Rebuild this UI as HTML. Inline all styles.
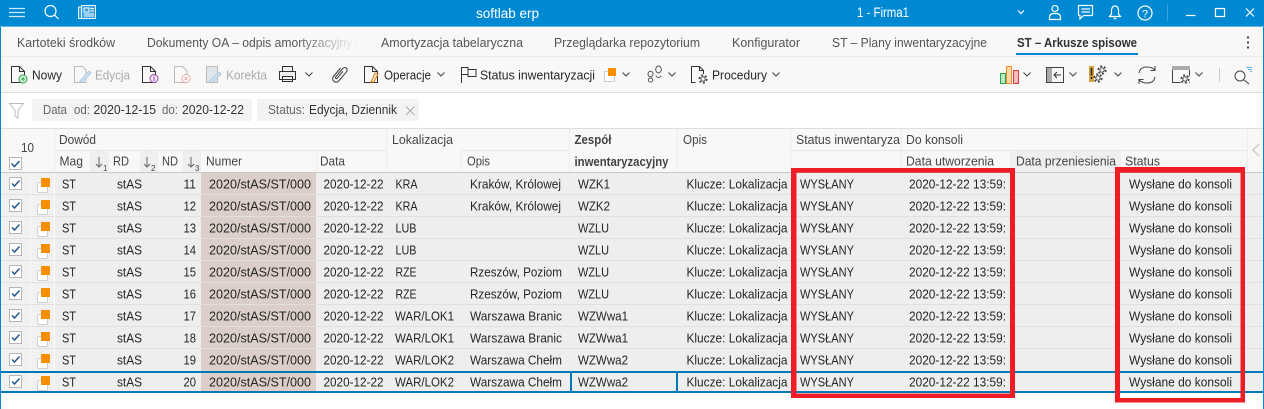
<!DOCTYPE html>
<html><head><meta charset="utf-8"><style>
html,body{margin:0;padding:0;background:#fff;width:1264px;height:409px;overflow:hidden}
svg{display:block}
text{font-family:"Liberation Sans",sans-serif;font-size:12.5px;fill:#262626;white-space:pre}
.t{fill:#fff;font-size:13.5px}
.tab{fill:#555;font-size:12.5px}
.b{font-weight:bold}
.h{fill:#444;font-size:12.5px}
.g{fill:#aaa}
.f{fill:#666}
.ln{fill:none;stroke:#333;stroke-width:1}
.w{fill:none;stroke:#fff;stroke-width:1.2}
.gi{fill:none;stroke:#bbb;stroke-width:1}
</style></head><body>
<svg width="1264" height="409" viewBox="0 0 1264 409" xmlns="http://www.w3.org/2000/svg">
<defs>
<linearGradient id="fd" x1="147" x2="353" y1="0" y2="0" gradientUnits="userSpaceOnUse"><stop offset="0.72" stop-color="#555"/><stop offset="1" stop-color="#555" stop-opacity="0.05"/></linearGradient>
<symbol id="ri" overflow="visible"><rect x="9.5" y="4.5" width="12" height="12" fill="#fff" stroke="#b5b5b5"/><path d="M12 10.500l2.500 2.500 5-5.500" fill="none" stroke="#27598c" stroke-width="1.500"/><rect x="37.500" y="9.500" width="10" height="10" rx="1.500" fill="#fff" stroke="#cfcfcf"/><rect x="41" y="5" width="9" height="9" fill="#f88f00"/></symbol>
<symbol id="ch" overflow="visible"><path d="M-3.500 -1.500L0 2l3.500-3.500" fill="none" stroke="#444" stroke-width="1"/></symbol>
<symbol id="dc" overflow="visible"><path d="M.5.5H8.500L13.500 5.500V16.500H.5Z M8.500.5V5.500H13.500" fill="none" stroke="#333"/></symbol>
<symbol id="gr" overflow="visible"><circle r="2.200" fill="none" stroke="#444"/><circle r="3.800" fill="none" stroke="#444" stroke-width="1.600" stroke-dasharray="2 1.980"/></symbol>
</defs>

<rect width="1264" height="409" fill="#fff"/>
<!-- title bar -->
<rect width="1264" height="26" fill="#0089d3"/>
<rect y="26" width="1264" height="1" fill="#6cb8e4"/>
<path d="M9 8.500H25M9 12.500H25M9 16.500H25" stroke="#cfe9f8" stroke-width="1.300"/>
<circle cx="50.500" cy="11" r="5.500" class="w"/><path d="M54.500 15L58.500 19" class="w"/>
<path d="M81.500 5.500H95.500V18.500H81.500ZM81 7H78.500V18.500H81.500" fill="#d5ebf8" fill-opacity=".25" stroke="#e6f4fc"/>
<rect x="84" y="8" width="5" height="4" fill="none" stroke="#fff"/><path d="M90.500 8.500H94M90.500 11H94M84 14H94M84 16H94" stroke="#fff"/>
<text class="t" x="476" y="18" textLength="63" lengthAdjust="spacingAndGlyphs">softlab erp</text>
<text class="t" x="857" y="17" textLength="52" lengthAdjust="spacingAndGlyphs">1 - Firma1</text>
<path d="M1018 10.500l3 3 3-3" class="w" stroke-width="1.600"/>
<circle cx="1055" cy="8.500" r="3" class="w"/><path d="M1049.500 19.500V17.500Q1049.500 14 1053 13.500H1057Q1060.500 14 1060.500 17.500V19.500Z" class="w"/>
<path d="M1078.500 5.500H1092.500V15.500H1083.500L1080 19V15.500H1078.500Z M1081.500 9H1090M1081.500 12H1090" class="w"/>
<path d="M1109.500 16.500H1120.500L1118.500 14V10Q1118 6 1115 6Q1112 6 1111.500 10V14ZM1113.500 18.500H1116.500" class="w"/>
<circle cx="1145" cy="13" r="7" class="w"/><text x="1142" y="17.500" style="fill:#fff;font-size:11px">?</text>
<rect x="1167" y="4" width="1" height="17" fill="#3ba3dd"/>
<path d="M1186 15.500H1195.500" class="w"/><rect x="1215.500" y="8.500" width="9" height="8" class="w"/><path d="M1246 8.500L1254 16.500M1254 8.500L1246 16.500" class="w"/>

<!-- tabs -->
<rect y="27" width="1264" height="29" fill="#f9f8f6"/>
<rect y="56" width="1264" height="1" fill="#eceae8"/>
<text class="tab" x="17" y="47" textLength="98" lengthAdjust="spacingAndGlyphs">Kartoteki środków</text>
<text class="tab" x="147" y="47" textLength="212" lengthAdjust="spacingAndGlyphs" style="fill:url(#fd)">Dokumenty OA – odpis amortyzacyjny /</text>
<text class="tab" x="381" y="47" textLength="142" lengthAdjust="spacingAndGlyphs">Amortyzacja tabelaryczna</text>
<text class="tab" x="554" y="47" textLength="146" lengthAdjust="spacingAndGlyphs">Przeglądarka repozytorium</text>
<text class="tab" x="732" y="47" textLength="68" lengthAdjust="spacingAndGlyphs">Konfigurator</text>
<text class="tab" x="832" y="47" textLength="155" lengthAdjust="spacingAndGlyphs">ST – Plany inwentaryzacyjne</text>
<text class="tab b" x="1017" y="47" textLength="120" lengthAdjust="spacingAndGlyphs" style="fill:#333">ST – Arkusze spisowe</text>
<rect x="1016" y="53" width="122" height="2" fill="#0089d3"/>
<path d="M1248 36.500v2M1248 41.500v2M1248 46.500v2" stroke="#444" stroke-width="2"/>

<!-- toolbar -->
<rect y="57" width="1264" height="35" fill="#f9f8f6"/>
<rect y="92" width="1264" height="1" fill="#ddd"/>
<use href="#dc" x="11" y="66"/><circle cx="23" cy="79" r="4" fill="#dff3df" stroke="#2aa24a"/><path d="M21 79h4M23 77v4" stroke="#2aa24a"/>
<text x="32" y="79.500" textLength="30" lengthAdjust="spacingAndGlyphs">Nowy</text>
<path d="M74.500 66.500H82.500L86 70V82.500H74.500Z" class="gi"/><path d="M80 81L89 71L91 73L82 82.500Z" fill="#cfe2f2" stroke="#b0cbe0"/>
<text class="g" x="95" y="79.500" textLength="35" lengthAdjust="spacingAndGlyphs">Edycja</text>
<use href="#dc" x="142" y="66"/><circle cx="154" cy="78.500" r="4" fill="#f6eef8" stroke="#9a3fb0"/><path d="M154 77v4M154 75.500v1" stroke="#9a3fb0"/>
<path d="M174.500 66.500H182.500L187 71V82.500H174.500Z" class="gi"/><circle cx="186" cy="78.500" r="4" fill="#fff" stroke="#eeaaaa"/><path d="M184.500 77l3 3M187.500 77l-3 3" stroke="#eeaaaa"/>
<path d="M206.500 66.500H217.500V82.500H206.500Z" fill="#dfe5ea" stroke="#bbb"/><path d="M209 82L219 72L221 74L212 83Z" fill="#cfe2f2" stroke="#b0cbe0"/>
<text class="g" x="226" y="79.500" textLength="41" lengthAdjust="spacingAndGlyphs">Korekta</text>
<path d="M282.500 71V66.500H292.500V71M279.500 71.500H295.500V79.500H279.500ZM282.500 76.500H292.500V81.500H282.500Z" fill="#eee" stroke="#333"/>
<use href="#ch" x="309" y="74"/>
<path transform="translate(339,74.500) rotate(40) translate(-6,-10)" d="M3 4V15a3.500 3.500 0 0 0 7 0V3a2.500 2.500 0 0 0-5 0V14a1 1 0 0 0 2 0V5" fill="none" stroke="#444" stroke-width="1.100"/>
<use href="#dc" x="364" y="66"/><path d="M371 82L375 73L378 74L374 82Z" fill="#fbe3c6" stroke="#e0811a"/>
<text x="384" y="79.500" textLength="47" lengthAdjust="spacingAndGlyphs">Operacje</text>
<use href="#ch" x="441" y="74"/>
<path d="M461.500 83V67.500H468V69.500H476V76.500H468V74.500H461.500M468 67.500V74.500" class="ln"/>
<text x="480" y="79.500" textLength="115" lengthAdjust="spacingAndGlyphs">Status inwentaryzacji</text>
<rect x="604.500" y="71.500" width="10" height="10" fill="#fff" stroke="#ccc"/><rect x="608" y="68" width="8" height="8" fill="#f88f00"/>
<use href="#ch" x="626" y="74"/>
<g fill="none" stroke="#555"><ellipse cx="650.500" cy="74" rx="2.500" ry="2.700"/><ellipse cx="650.500" cy="80" rx="2.200" ry="2"/><ellipse cx="658.500" cy="69.500" rx="2.800" ry="3.500"/><path d="M656 75.500a2.500 2 0 0 0 5 0"/></g>
<use href="#ch" x="672" y="74"/>
<path d="M695.500 82.500H691.500V66.500H699.500L703.500 70.500V74M699.500 66.500V70.500H703.500" class="ln"/><use href="#gr" x="703" y="79"/>
<text x="712" y="79.500" textLength="55" lengthAdjust="spacingAndGlyphs">Procedury</text>
<use href="#ch" x="776" y="74"/>
<rect x="1000.500" y="73.500" width="5" height="10" fill="#bfe6c6" stroke="#2aa24a"/>
<rect x="1006.500" y="66.500" width="5" height="17" fill="#fbd9a5" stroke="#e8912c"/>
<rect x="1013.500" y="70.500" width="5" height="13" fill="#f6bcbc" stroke="#dd3a3a"/>
<use href="#ch" x="1027" y="74"/>
<rect x="1046" y="67" width="6" height="16" fill="#aaa"/><rect x="1046.500" y="67.500" width="17" height="15" fill="none" stroke="#444"/><path d="M1061 75H1054M1057 72L1054 75L1057 78" fill="none" stroke="#333"/>
<use href="#ch" x="1073" y="74"/>
<rect x="1089" y="66" width="5" height="16" fill="#d4a13c"/><path d="M1091.500 68v7.500M1091.500 77v2" stroke="#222" stroke-width="1.500"/>
<use href="#gr" x="1102" y="70"/><use href="#gr" x="1098" y="78"/>
<use href="#ch" x="1118" y="74"/>
<path d="M1139 73Q1140 67 1147 67Q1152 67 1155 70M1155 66V70.500H1150.500M1155 77Q1154 83 1147 83Q1142 83 1139 80M1139 84V79.500H1143.500" fill="none" stroke="#444"/>
<rect x="1172.500" y="66.500" width="17" height="16" fill="none" stroke="#444"/><rect x="1172" y="66" width="18" height="4" fill="#aaa"/><circle cx="1185" cy="79" r="5.500" fill="#f9f8f6"/><use href="#gr" x="1185" y="79"/>
<use href="#ch" x="1199" y="74"/>
<rect x="1219" y="68" width="1" height="14" fill="#ccc"/>
<circle cx="1240" cy="76" r="5" fill="none" stroke="#444"/><path d="M1244 80L1249 84" stroke="#444"/><path d="M1246 67.500h6M1248 69.500h4M1250 71.500h2" stroke="#6bb5e5"/>

<!-- filter row -->
<rect y="128" width="1264" height="1" fill="#ddd"/>
<path d="M9.500 103.500H23.500L18 110.500V118L15 116V110.500Z" fill="none" stroke="#bbb"/>
<rect x="32" y="99" width="220" height="22" rx="2" fill="#f3f3f3"/>
<rect x="257" y="99" width="162" height="22" rx="2" fill="#f3f3f3"/>
<text class="f" x="43" y="114" textLength="24" lengthAdjust="spacingAndGlyphs">Data</text>
<text class="f" x="74" y="114" textLength="16" lengthAdjust="spacingAndGlyphs">od:</text>
<text x="93.500" y="114" textLength="62.500" lengthAdjust="spacingAndGlyphs" style="fill:#333">2020-12-15</text>
<text class="f" x="162" y="114" textLength="16" lengthAdjust="spacingAndGlyphs">do:</text>
<text x="182" y="114" textLength="62" lengthAdjust="spacingAndGlyphs" style="fill:#333">2020-12-22</text>
<text class="f" x="268" y="114" textLength="37" lengthAdjust="spacingAndGlyphs">Status:</text>
<text x="309" y="114" textLength="88" lengthAdjust="spacingAndGlyphs" style="fill:#333">Edycja, Dziennik</text>
<path d="M406 106.500L414.500 115M414.500 106.500L406 115" stroke="#aaa"/>

<!-- grid header -->
<rect x="1" y="129" width="1262" height="43" fill="#f9f8f6"/>
<rect x="1" y="172" width="1262" height="1" fill="#c8c8c8"/>
<rect x="90" y="151" width="18" height="21" fill="#efefef"/><rect x="140" y="151" width="17" height="21" fill="#efefef"/><rect x="183" y="151" width="17" height="21" fill="#efefef"/>
<rect x="1010" y="151" width="110" height="21" fill="#efefef"/>
<path d="M54.500 129V172M386.500 129V172M569.500 129V172M677.500 129V172M790.500 129V172M1247.500 129V172M108.500 151V172M140.500 151V172M157.500 151V172M183.500 151V172M200.500 151V172M316.500 151V172M461.500 151V172M901.500 129V172M1010.500 151V172M1120.500 151V172" stroke="#eeedeb"/>
<path d="M55 150.500H386M461 150.500H569M901 150.500H1247M790 150.500H901" stroke="#e8e7e5"/>
<text class="h" x="21" y="152" textLength="13" lengthAdjust="spacingAndGlyphs">10</text>
<rect x="9.500" y="157.500" width="12" height="12" fill="#fff" stroke="#b5b5b5"/><path d="M11.500 163.500l3 3 5-5.500" fill="none" stroke="#27598c" stroke-width="1.500"/>
<text class="h" x="59" y="144" textLength="37" lengthAdjust="spacingAndGlyphs">Dowód</text>
<text class="h" x="59.500" y="165.500" textLength="23.500" lengthAdjust="spacingAndGlyphs">Mag</text>
<path d="M99 157V167M96 164L99 167L102 164" fill="none" stroke="#666"/><text x="103" y="171" style="font-size:8px;fill:#444">1</text>
<text class="h" x="113" y="165.500" textLength="16" lengthAdjust="spacingAndGlyphs">RD</text>
<path d="M147 157V167M144 164L147 167L150 164" fill="none" stroke="#666"/><text x="151" y="171" style="font-size:8px;fill:#444">2</text>
<text class="h" x="162" y="165.500" textLength="16" lengthAdjust="spacingAndGlyphs">ND</text>
<path d="M191 157V167M188 164L191 167L194 164" fill="none" stroke="#666"/><text x="195" y="171" style="font-size:8px;fill:#444">3</text>
<text class="h" x="206" y="165.500" textLength="36" lengthAdjust="spacingAndGlyphs">Numer</text>
<text class="h" x="320" y="165.500" textLength="25" lengthAdjust="spacingAndGlyphs">Data</text>
<text class="h" x="392" y="144" textLength="61" lengthAdjust="spacingAndGlyphs">Lokalizacja</text>
<text class="h" x="467" y="165.500" textLength="23" lengthAdjust="spacingAndGlyphs">Opis</text>
<text class="h b" x="574.500" y="144" textLength="37" lengthAdjust="spacingAndGlyphs">Zespół</text>
<text class="h b" x="574.500" y="166" textLength="94" lengthAdjust="spacingAndGlyphs">inwentaryzacyjny</text>
<text class="h" x="683" y="144" textLength="24" lengthAdjust="spacingAndGlyphs">Opis</text>
<text class="h" x="796" y="144" textLength="104" lengthAdjust="spacingAndGlyphs">Status inwentaryza</text>
<text class="h" x="906" y="144" textLength="57" lengthAdjust="spacingAndGlyphs">Do konsoli</text>
<text class="h" x="906" y="165.500" textLength="88" lengthAdjust="spacingAndGlyphs">Data utworzenia</text>
<text class="h" x="1016" y="165.500" textLength="100" lengthAdjust="spacingAndGlyphs">Data przeniesienia</text>
<text class="h" x="1125" y="165.500" textLength="35" lengthAdjust="spacingAndGlyphs">Status</text>
<path d="M1259 144L1253 150L1259 156" fill="none" stroke="#ccc" stroke-width="1.500"/>

<!-- rows background -->
<rect x="1" y="173" width="1262" height="219" fill="#eeeeee"/>
<rect x="201" y="173" width="115" height="219" fill="#dccfca"/>
<rect x="1" y="173" width="53" height="219" fill="#f1f1f1"/>
<path d="M1 194.500H1263M1 216.500H1263M1 238.500H1263M1 260.500H1263M1 282.500H1263M1 304.500H1263M1 326.500H1263M1 348.500H1263" stroke="#e0e0e0"/>
<path d="M30.500 173V392M54.500 173V392" stroke="#fafafa"/>

<g transform="translate(0,173)"><use href="#ri"/>
<text x="62" y="15.500" textLength="14" lengthAdjust="spacingAndGlyphs">ST</text><text x="117" y="15.500" textLength="25" lengthAdjust="spacingAndGlyphs">stAS</text><text x="183.500" y="15.500" textLength="12.500" lengthAdjust="spacingAndGlyphs">11</text><text x="209" y="15.500" textLength="102" lengthAdjust="spacingAndGlyphs">2020/stAS/ST/000</text><text x="323.500" y="15.500" textLength="60" lengthAdjust="spacingAndGlyphs">2020-12-22</text>
<text x="395.500" y="15.500" textLength="22" lengthAdjust="spacingAndGlyphs">KRA</text><text x="470" y="15.500" textLength="91" lengthAdjust="spacingAndGlyphs">Kraków, Królowej</text><text x="578" y="15.500" textLength="32" lengthAdjust="spacingAndGlyphs">WZK1</text><text x="686.500" y="15.500" textLength="101" lengthAdjust="spacingAndGlyphs">Klucze: Lokalizacja</text>
<text x="800" y="15.500" textLength="54" lengthAdjust="spacingAndGlyphs">WYSŁANY</text><text x="909" y="15.500" textLength="97" lengthAdjust="spacingAndGlyphs">2020-12-22 13:59:</text><text x="1129" y="15.500" textLength="103" lengthAdjust="spacingAndGlyphs">Wysłane do konsoli</text></g>

<g transform="translate(0,195)"><use href="#ri"/>
<text x="62" y="15.500" textLength="14" lengthAdjust="spacingAndGlyphs">ST</text><text x="117" y="15.500" textLength="25" lengthAdjust="spacingAndGlyphs">stAS</text><text x="183.500" y="15.500" textLength="12.500" lengthAdjust="spacingAndGlyphs">12</text><text x="209" y="15.500" textLength="102" lengthAdjust="spacingAndGlyphs">2020/stAS/ST/000</text><text x="323.500" y="15.500" textLength="60" lengthAdjust="spacingAndGlyphs">2020-12-22</text>
<text x="395.500" y="15.500" textLength="22" lengthAdjust="spacingAndGlyphs">KRA</text><text x="470" y="15.500" textLength="91" lengthAdjust="spacingAndGlyphs">Kraków, Królowej</text><text x="578" y="15.500" textLength="32" lengthAdjust="spacingAndGlyphs">WZK2</text><text x="686.500" y="15.500" textLength="101" lengthAdjust="spacingAndGlyphs">Klucze: Lokalizacja</text>
<text x="800" y="15.500" textLength="54" lengthAdjust="spacingAndGlyphs">WYSŁANY</text><text x="909" y="15.500" textLength="97" lengthAdjust="spacingAndGlyphs">2020-12-22 13:59:</text><text x="1129" y="15.500" textLength="103" lengthAdjust="spacingAndGlyphs">Wysłane do konsoli</text></g>

<g transform="translate(0,217)"><use href="#ri"/>
<text x="62" y="15.500" textLength="14" lengthAdjust="spacingAndGlyphs">ST</text><text x="117" y="15.500" textLength="25" lengthAdjust="spacingAndGlyphs">stAS</text><text x="183.500" y="15.500" textLength="12.500" lengthAdjust="spacingAndGlyphs">13</text><text x="209" y="15.500" textLength="102" lengthAdjust="spacingAndGlyphs">2020/stAS/ST/000</text><text x="323.500" y="15.500" textLength="60" lengthAdjust="spacingAndGlyphs">2020-12-22</text>
<text x="395.500" y="15.500" textLength="21" lengthAdjust="spacingAndGlyphs">LUB</text><text x="578" y="15.500" textLength="31" lengthAdjust="spacingAndGlyphs">WZLU</text><text x="686.500" y="15.500" textLength="101" lengthAdjust="spacingAndGlyphs">Klucze: Lokalizacja</text>
<text x="800" y="15.500" textLength="54" lengthAdjust="spacingAndGlyphs">WYSŁANY</text><text x="909" y="15.500" textLength="97" lengthAdjust="spacingAndGlyphs">2020-12-22 13:59:</text><text x="1129" y="15.500" textLength="103" lengthAdjust="spacingAndGlyphs">Wysłane do konsoli</text></g>

<g transform="translate(0,239)"><use href="#ri"/>
<text x="62" y="15.500" textLength="14" lengthAdjust="spacingAndGlyphs">ST</text><text x="117" y="15.500" textLength="25" lengthAdjust="spacingAndGlyphs">stAS</text><text x="183.500" y="15.500" textLength="12.500" lengthAdjust="spacingAndGlyphs">14</text><text x="209" y="15.500" textLength="102" lengthAdjust="spacingAndGlyphs">2020/stAS/ST/000</text><text x="323.500" y="15.500" textLength="60" lengthAdjust="spacingAndGlyphs">2020-12-22</text>
<text x="395.500" y="15.500" textLength="21" lengthAdjust="spacingAndGlyphs">LUB</text><text x="578" y="15.500" textLength="31" lengthAdjust="spacingAndGlyphs">WZLU</text><text x="686.500" y="15.500" textLength="101" lengthAdjust="spacingAndGlyphs">Klucze: Lokalizacja</text>
<text x="800" y="15.500" textLength="54" lengthAdjust="spacingAndGlyphs">WYSŁANY</text><text x="909" y="15.500" textLength="97" lengthAdjust="spacingAndGlyphs">2020-12-22 13:59:</text><text x="1129" y="15.500" textLength="103" lengthAdjust="spacingAndGlyphs">Wysłane do konsoli</text></g>

<g transform="translate(0,261)"><use href="#ri"/>
<text x="62" y="15.500" textLength="14" lengthAdjust="spacingAndGlyphs">ST</text><text x="117" y="15.500" textLength="25" lengthAdjust="spacingAndGlyphs">stAS</text><text x="183.500" y="15.500" textLength="12.500" lengthAdjust="spacingAndGlyphs">15</text><text x="209" y="15.500" textLength="102" lengthAdjust="spacingAndGlyphs">2020/stAS/ST/000</text><text x="323.500" y="15.500" textLength="60" lengthAdjust="spacingAndGlyphs">2020-12-22</text>
<text x="395.500" y="15.500" textLength="21" lengthAdjust="spacingAndGlyphs">RZE</text><text x="470" y="15.500" textLength="92" lengthAdjust="spacingAndGlyphs">Rzeszów, Poziom</text><text x="578" y="15.500" textLength="31" lengthAdjust="spacingAndGlyphs">WZLU</text><text x="686.500" y="15.500" textLength="101" lengthAdjust="spacingAndGlyphs">Klucze: Lokalizacja</text>
<text x="800" y="15.500" textLength="54" lengthAdjust="spacingAndGlyphs">WYSŁANY</text><text x="909" y="15.500" textLength="97" lengthAdjust="spacingAndGlyphs">2020-12-22 13:59:</text><text x="1129" y="15.500" textLength="103" lengthAdjust="spacingAndGlyphs">Wysłane do konsoli</text></g>

<g transform="translate(0,283)"><use href="#ri"/>
<text x="62" y="15.500" textLength="14" lengthAdjust="spacingAndGlyphs">ST</text><text x="117" y="15.500" textLength="25" lengthAdjust="spacingAndGlyphs">stAS</text><text x="183.500" y="15.500" textLength="12.500" lengthAdjust="spacingAndGlyphs">16</text><text x="209" y="15.500" textLength="102" lengthAdjust="spacingAndGlyphs">2020/stAS/ST/000</text><text x="323.500" y="15.500" textLength="60" lengthAdjust="spacingAndGlyphs">2020-12-22</text>
<text x="395.500" y="15.500" textLength="21" lengthAdjust="spacingAndGlyphs">RZE</text><text x="470" y="15.500" textLength="92" lengthAdjust="spacingAndGlyphs">Rzeszów, Poziom</text><text x="578" y="15.500" textLength="31" lengthAdjust="spacingAndGlyphs">WZLU</text><text x="686.500" y="15.500" textLength="101" lengthAdjust="spacingAndGlyphs">Klucze: Lokalizacja</text>
<text x="800" y="15.500" textLength="54" lengthAdjust="spacingAndGlyphs">WYSŁANY</text><text x="909" y="15.500" textLength="97" lengthAdjust="spacingAndGlyphs">2020-12-22 13:59:</text><text x="1129" y="15.500" textLength="103" lengthAdjust="spacingAndGlyphs">Wysłane do konsoli</text></g>

<g transform="translate(0,305)"><use href="#ri"/>
<text x="62" y="15.500" textLength="14" lengthAdjust="spacingAndGlyphs">ST</text><text x="117" y="15.500" textLength="25" lengthAdjust="spacingAndGlyphs">stAS</text><text x="183.500" y="15.500" textLength="12.500" lengthAdjust="spacingAndGlyphs">17</text><text x="209" y="15.500" textLength="102" lengthAdjust="spacingAndGlyphs">2020/stAS/ST/000</text><text x="323.500" y="15.500" textLength="60" lengthAdjust="spacingAndGlyphs">2020-12-22</text>
<text x="395" y="15.500" textLength="59" lengthAdjust="spacingAndGlyphs">WAR/LOK1</text><text x="470" y="15.500" textLength="92" lengthAdjust="spacingAndGlyphs">Warszawa Branic</text><text x="578" y="15.500" textLength="50" lengthAdjust="spacingAndGlyphs">WZWwa1</text><text x="686.500" y="15.500" textLength="101" lengthAdjust="spacingAndGlyphs">Klucze: Lokalizacja</text>
<text x="800" y="15.500" textLength="54" lengthAdjust="spacingAndGlyphs">WYSŁANY</text><text x="909" y="15.500" textLength="97" lengthAdjust="spacingAndGlyphs">2020-12-22 13:59:</text><text x="1129" y="15.500" textLength="103" lengthAdjust="spacingAndGlyphs">Wysłane do konsoli</text></g>

<g transform="translate(0,327)"><use href="#ri"/>
<text x="62" y="15.500" textLength="14" lengthAdjust="spacingAndGlyphs">ST</text><text x="117" y="15.500" textLength="25" lengthAdjust="spacingAndGlyphs">stAS</text><text x="183.500" y="15.500" textLength="12.500" lengthAdjust="spacingAndGlyphs">18</text><text x="209" y="15.500" textLength="102" lengthAdjust="spacingAndGlyphs">2020/stAS/ST/000</text><text x="323.500" y="15.500" textLength="60" lengthAdjust="spacingAndGlyphs">2020-12-22</text>
<text x="395" y="15.500" textLength="59" lengthAdjust="spacingAndGlyphs">WAR/LOK1</text><text x="470" y="15.500" textLength="92" lengthAdjust="spacingAndGlyphs">Warszawa Branic</text><text x="578" y="15.500" textLength="50" lengthAdjust="spacingAndGlyphs">WZWwa1</text><text x="686.500" y="15.500" textLength="101" lengthAdjust="spacingAndGlyphs">Klucze: Lokalizacja</text>
<text x="800" y="15.500" textLength="54" lengthAdjust="spacingAndGlyphs">WYSŁANY</text><text x="909" y="15.500" textLength="97" lengthAdjust="spacingAndGlyphs">2020-12-22 13:59:</text><text x="1129" y="15.500" textLength="103" lengthAdjust="spacingAndGlyphs">Wysłane do konsoli</text></g>

<g transform="translate(0,349)"><use href="#ri"/>
<text x="62" y="15.500" textLength="14" lengthAdjust="spacingAndGlyphs">ST</text><text x="117" y="15.500" textLength="25" lengthAdjust="spacingAndGlyphs">stAS</text><text x="183.500" y="15.500" textLength="12.500" lengthAdjust="spacingAndGlyphs">19</text><text x="209" y="15.500" textLength="102" lengthAdjust="spacingAndGlyphs">2020/stAS/ST/000</text><text x="323.500" y="15.500" textLength="60" lengthAdjust="spacingAndGlyphs">2020-12-22</text>
<text x="395" y="15.500" textLength="59" lengthAdjust="spacingAndGlyphs">WAR/LOK2</text><text x="470" y="15.500" textLength="92" lengthAdjust="spacingAndGlyphs">Warszawa Chełm</text><text x="578" y="15.500" textLength="50" lengthAdjust="spacingAndGlyphs">WZWwa2</text><text x="686.500" y="15.500" textLength="101" lengthAdjust="spacingAndGlyphs">Klucze: Lokalizacja</text>
<text x="800" y="15.500" textLength="54" lengthAdjust="spacingAndGlyphs">WYSŁANY</text><text x="909" y="15.500" textLength="97" lengthAdjust="spacingAndGlyphs">2020-12-22 13:59:</text><text x="1129" y="15.500" textLength="103" lengthAdjust="spacingAndGlyphs">Wysłane do konsoli</text></g>

<rect x="1" y="371" width="1262" height="2" fill="#0079b8"/>
<rect x="1" y="391" width="1262" height="2" fill="#0079b8"/>
<rect x="570" y="371" width="2" height="22" fill="#0079b8"/>
<rect x="676" y="371" width="2" height="22" fill="#0079b8"/>

<g transform="translate(0,371)"><use href="#ri"/>
<text x="62" y="15.500" textLength="14" lengthAdjust="spacingAndGlyphs">ST</text><text x="117" y="15.500" textLength="25" lengthAdjust="spacingAndGlyphs">stAS</text><text x="183.500" y="15.500" textLength="12.500" lengthAdjust="spacingAndGlyphs">20</text><text x="209" y="15.500" textLength="102" lengthAdjust="spacingAndGlyphs">2020/stAS/ST/000</text><text x="323.500" y="15.500" textLength="60" lengthAdjust="spacingAndGlyphs">2020-12-22</text>
<text x="395" y="15.500" textLength="59" lengthAdjust="spacingAndGlyphs">WAR/LOK2</text><text x="470" y="15.500" textLength="92" lengthAdjust="spacingAndGlyphs">Warszawa Chełm</text><text x="578" y="15.500" textLength="50" lengthAdjust="spacingAndGlyphs">WZWwa2</text><text x="686.500" y="15.500" textLength="101" lengthAdjust="spacingAndGlyphs">Klucze: Lokalizacja</text>
<text x="800" y="15.500" textLength="54" lengthAdjust="spacingAndGlyphs">WYSŁANY</text><text x="909" y="15.500" textLength="97" lengthAdjust="spacingAndGlyphs">2020-12-22 13:59:</text><text x="1129" y="15.500" textLength="103" lengthAdjust="spacingAndGlyphs">Wysłane do konsoli</text></g>

<!-- outer frame -->
<rect x="0" y="27" width="1" height="382" fill="#0089d3"/>
<rect x="1263" y="27" width="1" height="382" fill="#0089d3"/>

<!-- red annotation boxes -->
<path fill-rule="evenodd" fill="#ee1c25" d="M791 168H1015V398H791ZM796.500 172.800V393.500H1010V172.800Z"/>
<path fill-rule="evenodd" fill="#ee1c25" d="M1115 167H1245V402.500H1115ZM1120 172.800V398H1240.500V172.800Z"/>
</svg>
</body></html>
